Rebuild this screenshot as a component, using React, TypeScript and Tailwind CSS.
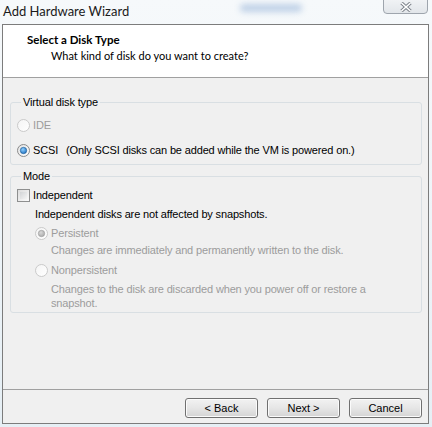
import React from "react";

// Windows 7 style radio; `checked` draws the blue (or grey when disabled) dot.
function Radio({ checked = false, disabled = false }: { checked?: boolean; disabled?: boolean }) {
  const ring = disabled ? "#c9c9c9" : "#8a8a8a";
  const dot = disabled ? "#a9a9a9" : "#1f6fbf";
  return (
    <svg width="13" height="13" viewBox="0 0 13 13" className="shrink-0">
      <defs>
        <linearGradient id={`rf-${disabled}-${checked}`} x1="0" y1="0" x2="1" y2="1">
          <stop offset="0" stopColor={disabled ? "#f4f4f4" : "#e2e2e2"} />
          <stop offset="1" stopColor="#ffffff" />
        </linearGradient>
        <radialGradient id={`rd-${disabled}`} cx="0.4" cy="0.35" r="0.7">
          <stop offset="0" stopColor={disabled ? "#d8d8d8" : "#8fd0ff"} />
          <stop offset="1" stopColor={dot} />
        </radialGradient>
      </defs>
      <circle cx="6.5" cy="6.5" r="6" fill={`url(#rf-${disabled}-${checked})`} stroke={ring} strokeWidth="1" />
      {checked && (
        <circle
          cx="6.5"
          cy="6.5"
          r="3.2"
          fill={`url(#rd-${disabled})`}
          stroke={disabled ? "#9a9a9a" : "#1c5a94"}
          strokeWidth="0.6"
        />
      )}
    </svg>
  );
}

function Checkbox() {
  return (
    <span className="w-[13px] h-[13px] shrink-0 border border-[#8e8f8f] bg-gradient-to-br from-[#dcdcdc] to-[#fbfbfb] p-[2px]">
      <span className="block w-full h-full bg-gradient-to-br from-[#d2d4d6] to-[#f4f4f4]" />
    </span>
  );
}

function WinButton({ label }: { label: string }) {
  return (
    <button
      type="button"
      className="w-[73px] h-[20px] border border-[#707070] rounded-[3px] bg-gradient-to-b from-[#f2f2f2] via-[#e6e6e6] to-[#d4d4d4] text-black shadow-[inset_0_0_0_1px_#fbfbfb]"
    >
      {label}
    </button>
  );
}

export default function App() {
  const body = "font-['Liberation_Sans',Arial,sans-serif] text-[11px] leading-[14px] tracking-[-0.15px]";
  const muted = "text-[#9c9c9c]";

  return (
    <div className="w-[432px] h-[427px] overflow-hidden bg-gradient-to-b from-[#f6f9fb] via-[#eef4f8] to-[#e6eff5] relative">
      {/* aero glass title bar */}
      <div className="h-[24px] flex items-start relative">
        <span className="pl-[3px] pt-[1px] text-[13px] leading-[20px] text-[#1a1a1a] font-['Lato',sans-serif]">
          Add Hardware Wizard
        </span>
        <div className="absolute left-[240px] top-[4px] w-[62px] h-[8px] rounded-full bg-[#6c95c9] opacity-40 blur-[3px]" />
        <div className="absolute left-[383px] top-[-4px] w-[45px] h-[18px] rounded-b-[4px] border border-[#9ea5ad] bg-gradient-to-b from-[#f3f5f7] to-[#e2e6ea] flex items-center justify-center pt-[3px]">
          <svg width="12" height="10" viewBox="0 0 12 10">
            <path d="M1.5 1 L10.5 9 M10.5 1 L1.5 9" stroke="#7b8189" strokeWidth="3.4" />
            <path d="M1.5 1 L10.5 9 M10.5 1 L1.5 9" stroke="#ffffff" strokeWidth="1.6" />
          </svg>
        </div>
      </div>

      {/* dialog client area */}
      <div className={`ml-[2px] w-[427px] h-[400px] border border-[#7c7c7c] bg-[#f0f0f0] flex flex-col ${body}`}>
        <div className="h-[53px] shrink-0 bg-white border-b border-[#a0a0a0] font-['Lato',sans-serif] tracking-normal">
          <div className="pl-[24px] pt-[7px] text-[11.5px] font-bold leading-[16px]">Select a Disk Type</div>
          <div className="pl-[48px] text-[11px] leading-[16px]">What kind of disk do you want to create?</div>
        </div>

        <fieldset className="mt-[17px] ml-[7px] mr-[6px] border border-[#d9dfe3] rounded-[3px] px-[6px] pb-[6px]">
          <legend className="ml-[4px] px-[2px] leading-[14px]">Virtual disk type</legend>
          <div className="mt-[8px] flex items-center gap-[3px] h-[16px]">
            <Radio disabled />
            <span className={muted}>IDE</span>
          </div>
          <div className="mt-[9px] flex items-center gap-[3px] h-[16px]">
            <Radio checked />
            <span>SCSI</span>
            <span className="ml-[5px]">(Only SCSI disks can be added while the VM is powered on.)</span>
          </div>
        </fieldset>

        <fieldset className="mt-[4px] ml-[7px] mr-[6px] border border-[#d9dfe3] rounded-[3px] px-[6px] pb-[2px]">
          <legend className="ml-[4px] px-[2px] leading-[14px]">Mode</legend>
          <div className="mt-[4px] flex items-center gap-[3px] h-[16px]">
            <Checkbox />
            <span>Independent</span>
          </div>
          <div className="mt-[4px] pl-[18px]">Independent disks are not affected by snapshots.</div>
          <div className="mt-[4px] pl-[18px] flex items-center gap-[3px] h-[16px]">
            <Radio checked disabled />
            <span className={muted}>Persistent</span>
          </div>
          <div className={`mt-[2px] pl-[34px] ${muted}`}>Changes are immediately and permanently written to the disk.</div>
          <div className="mt-[5px] pl-[18px] flex items-center gap-[3px] h-[16px]">
            <Radio disabled />
            <span className={muted}>Nonpersistent</span>
          </div>
          <div className={`mt-[4px] ml-[34px] w-[330px] ${muted}`}>
            Changes to the disk are discarded when you power off or restore a snapshot.
          </div>
        </fieldset>

        <div className="flex-1" />

        <div className="h-[34px] shrink-0 border-t border-[#a0a0a0] flex justify-end items-start gap-[9px] pt-[8px] pr-[6px] tracking-normal">
          <WinButton label="< Back" />
          <WinButton label="Next >" />
          <WinButton label="Cancel" />
        </div>
      </div>
    </div>
  );
}
